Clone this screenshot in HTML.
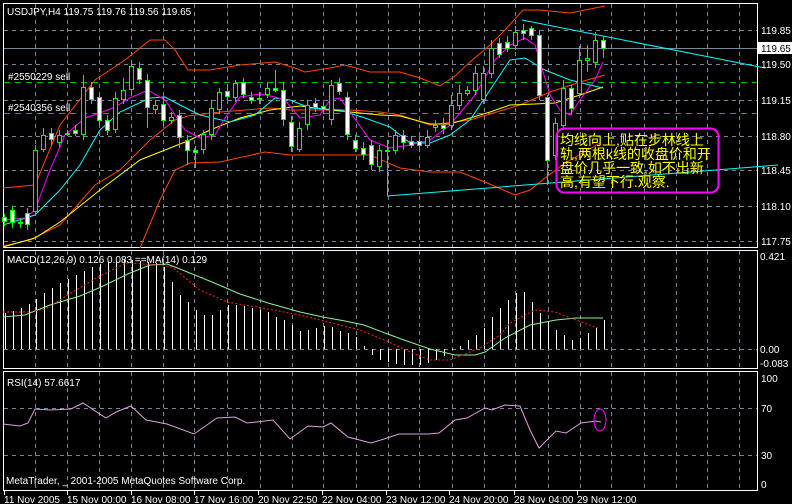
<!DOCTYPE html>
<html><head><meta charset="utf-8"><style>
body{margin:0;background:#000;width:792px;height:504px;overflow:hidden}
svg{display:block}
text{font-family:"Liberation Sans","Noto Sans CJK SC",sans-serif;font-size:10px;fill:#fff}
.g{stroke:#778899;stroke-width:1;stroke-dasharray:4 4;fill:none}
.w{fill:#fff;stroke:#00ff00;stroke-width:1}
.b{fill:#000;stroke:#00ff00;stroke-width:1}
.k{stroke:#00ff00;stroke-width:1}
</style></head><body>
<svg width="792" height="504" viewBox="0 0 792 504" xmlns="http://www.w3.org/2000/svg" shape-rendering="crispEdges">
<g class="g">
<path d="M35.5 4V247M67.5 4V247M99.5 4V247M131.5 4V247M163.5 4V247M194.5 4V247M227.5 4V247M260.5 4V247M292.5 4V247M323.5 4V247M356.5 4V247M388.5 4V247M419.5 4V247M452.5 4V247M484.5 4V247M515.5 4V247M548.5 4V247M580.5 4V247M611.5 4V247M644.5 4V247M676.5 4V247M707.5 4V247M739.5 4V247"/>
<path d="M4 30.5H757M4 64.5H757M4 100.5H757M4 136.5H757M4 170.5H757M4 206.5H757M4 241.5H757"/>
<path d="M35.5 251V368M67.5 251V368M99.5 251V368M131.5 251V368M163.5 251V368M194.5 251V368M227.5 251V368M260.5 251V368M292.5 251V368M323.5 251V368M356.5 251V368M388.5 251V368M419.5 251V368M452.5 251V368M484.5 251V368M515.5 251V368M548.5 251V368M580.5 251V368M611.5 251V368M644.5 251V368M676.5 251V368M707.5 251V368M739.5 251V368"/>
<path d="M4 349.5H757"/>
<path d="M35.5 372V490M67.5 372V490M99.5 372V490M131.5 372V490M163.5 372V490M194.5 372V490M227.5 372V490M260.5 372V490M292.5 372V490M323.5 372V490M356.5 372V490M388.5 372V490M419.5 372V490M452.5 372V490M484.5 372V490M515.5 372V490M548.5 372V490M580.5 372V490M611.5 372V490M644.5 372V490M676.5 372V490M707.5 372V490M739.5 372V490"/>
<path d="M4 408.5H757M4 455.5H757"/>
</g>
<path d="M4 48.5H757" stroke="#778899" fill="none"/>
<path d="M4 82.5H757M4 113.5H757" stroke="#00c000" stroke-dasharray="6 5" fill="none"/>
<rect x="3.5" y="3.5" width="754" height="244" fill="none" stroke="#fff"/>
<rect x="3.5" y="250.5" width="754" height="118" fill="none" stroke="#fff"/>
<rect x="3.5" y="371.5" width="754" height="119" fill="none" stroke="#fff"/>
<g shape-rendering="auto" fill="none" stroke-width="1">
<polyline stroke="#ff4500" points="3,188 35,185 60,125 95,80 125,60 150,40 165,40 175,50 188,70 210,70 240,65 275,62 295,68 305,72 330,68 345,65 370,72 400,72 420,78 440,86 455,76 470,62 490,45 505,30 523,10 540,10 570,13 605,6"/>
<polyline stroke="#ff4500" points="3,246 30,240 60,225 95,185 120,170 150,140 175,120 188,116 220,112 270,108 290,110 320,110 350,110 380,112 400,115 430,125 470,120 520,105 550,92 580,82 605,75"/>
<polyline stroke="#ff4500" points="140,248 160,200 175,170 190,163 220,162 265,152 290,155 330,155 370,155 400,168 430,172 460,172 485,182 515,195 530,190 545,178 565,163 600,143"/>
<polyline stroke="#ffff00" points="3,247 35,238 60,222 100,190 140,160 165,150 190,140 210,130 240,118 270,110 300,106 330,110 350,112 380,115 400,116 430,124 450,124 470,118 490,112 510,105 535,104 555,103 580,95 603,87"/>
<polyline stroke="#00ffff" points="3,225 35,215 60,190 80,165 100,130 120,112 150,98 165,97 180,105 200,115 230,122 255,115 275,98 290,100 310,108 340,110 365,118 390,127 410,143 430,143 450,135 470,120 490,90 510,60 525,58 545,70 570,80 590,85 603,88"/>
<polyline stroke="#ff00ff" points="3,220 25,218 35,210 50,170 65,135 85,118 100,113 115,107 130,98 148,90 165,100 185,130 200,138 215,135 225,118 240,97 260,94 275,97 285,100 300,118 320,115 330,100 340,98 350,112 370,140 390,148 410,145 430,140 450,125 475,95 495,60 510,45 525,38 535,45 550,95 560,110 570,115 580,100 595,80 603,62"/>
<line x1="522" y1="20" x2="765" y2="68" stroke="#00ffff"/>
<line x1="387" y1="196" x2="778" y2="165" stroke="#00ffff"/>
</g>
<g>
<path class="k" d="M4.5 214V226M12.5 206V228M20.5 218V228M27.5 208V230M35.5 145V216M43.5 128V152M51.5 128V145M59.5 130V147M67.5 130V136M75.5 125V136M83.5 75V140M91.5 82V104M99.5 92V125M107.5 115V135M115.5 92V133M123.5 78V104M131.5 60V95M139.5 62V84M147.5 74V128M155.5 100V114M163.5 96V126M171.5 112V124M179.5 110V148M187.5 135V165M195.5 146V168M203.5 130V154M211.5 100V140M219.5 88V114M227.5 86V100M235.5 80V102M243.5 78V98M251.5 92V104M259.5 92V104M267.5 82V98M275.5 70V92M283.5 82V126M291.5 116V152M299.5 122V152M307.5 100V130M315.5 98V112M323.5 102V114M331.5 80V125M339.5 78V95M347.5 92V140M355.5 135V152M363.5 142V160M371.5 140V170M379.5 145V172M387.5 140V196M395.5 130V154M403.5 130V150M411.5 136V148M419.5 136V150M427.5 130V148M435.5 120V132M443.5 118V134M451.5 95V130M459.5 85V110M467.5 86V96M475.5 66V95M483.5 66V104M491.5 40V78M499.5 38V58M507.5 36V52M515.5 26V50M523.5 24V40M531.5 26V40M539.5 30V100M547.5 95V185M555.5 118V160M563.5 80V130M571.5 85V115M579.5 46V98M587.5 45V72M595.5 32V68M603.5 36V58"/>
<rect class="w" x="2.5" y="217.5" width="4" height="4"/>
<rect class="w" x="10.5" y="210.5" width="4" height="12"/>
<rect class="b" x="18.5" y="222.5" width="4" height="1"/>
<rect class="w" x="25.5" y="213.5" width="4" height="11"/>
<rect class="b" x="33.5" y="150.5" width="4" height="61"/>
<rect class="b" x="41.5" y="135.5" width="4" height="14"/>
<rect class="w" x="49.5" y="133.5" width="4" height="6"/>
<rect class="b" x="57.5" y="135.5" width="4" height="7"/>
<rect class="b" x="65.5" y="133.5" width="4" height="1"/>
<rect class="w" x="73.5" y="130.5" width="4" height="3"/>
<rect class="b" x="81.5" y="87.5" width="4" height="47"/>
<rect class="w" x="89.5" y="87.5" width="4" height="12"/>
<rect class="w" x="97.5" y="97.5" width="4" height="23"/>
<rect class="w" x="105.5" y="120.5" width="4" height="10"/>
<rect class="b" x="113.5" y="98.5" width="4" height="31"/>
<rect class="b" x="121.5" y="90.5" width="4" height="9"/>
<rect class="b" x="129.5" y="66.5" width="4" height="23"/>
<rect class="w" x="137.5" y="68.5" width="4" height="11"/>
<rect class="w" x="145.5" y="80.5" width="4" height="27"/>
<rect class="b" x="153.5" y="105.5" width="4" height="4"/>
<rect class="w" x="161.5" y="104.5" width="4" height="16"/>
<rect class="b" x="169.5" y="117.5" width="4" height="3"/>
<rect class="w" x="177.5" y="115.5" width="4" height="22"/>
<rect class="w" x="185.5" y="140.5" width="4" height="10"/>
<rect class="w" x="193.5" y="150.5" width="4" height="2"/>
<rect class="b" x="201.5" y="134.5" width="4" height="15"/>
<rect class="b" x="209.5" y="108.5" width="4" height="26"/>
<rect class="b" x="217.5" y="92.5" width="4" height="17"/>
<rect class="w" x="225.5" y="91.5" width="4" height="5"/>
<rect class="b" x="233.5" y="83.5" width="4" height="14"/>
<rect class="w" x="241.5" y="82.5" width="4" height="12"/>
<rect class="w" x="249.5" y="97.5" width="4" height="3"/>
<rect class="b" x="257.5" y="98.5" width="4" height="1"/>
<rect class="b" x="265.5" y="88.5" width="4" height="6"/>
<rect class="w" x="273.5" y="88.5" width="4" height="2"/>
<rect class="w" x="281.5" y="90.5" width="4" height="29"/>
<rect class="w" x="289.5" y="122.5" width="4" height="24"/>
<rect class="b" x="297.5" y="128.5" width="4" height="21"/>
<rect class="b" x="305.5" y="105.5" width="4" height="19"/>
<rect class="w" x="313.5" y="103.5" width="4" height="4"/>
<rect class="w" x="321.5" y="106.5" width="4" height="3"/>
<rect class="b" x="329.5" y="85.5" width="4" height="34"/>
<rect class="w" x="337.5" y="83.5" width="4" height="8"/>
<rect class="w" x="345.5" y="97.5" width="4" height="37"/>
<rect class="w" x="353.5" y="140.5" width="4" height="8"/>
<rect class="w" x="361.5" y="148.5" width="4" height="6"/>
<rect class="w" x="369.5" y="145.5" width="4" height="19"/>
<rect class="b" x="377.5" y="150.5" width="4" height="16"/>
<rect class="b" x="385.5" y="150.5" width="4" height="1"/>
<rect class="b" x="393.5" y="135.5" width="4" height="15"/>
<rect class="w" x="401.5" y="135.5" width="4" height="7"/>
<rect class="w" x="409.5" y="141.5" width="4" height="4"/>
<rect class="w" x="417.5" y="141.5" width="4" height="4"/>
<rect class="b" x="425.5" y="137.5" width="4" height="8"/>
<rect class="b" x="433.5" y="125.5" width="4" height="2"/>
<rect class="w" x="441.5" y="125.5" width="4" height="3"/>
<rect class="b" x="449.5" y="105.5" width="4" height="20"/>
<rect class="b" x="457.5" y="93.5" width="4" height="12"/>
<rect class="b" x="465.5" y="90.5" width="4" height="3"/>
<rect class="b" x="473.5" y="73.5" width="4" height="17"/>
<rect class="b" x="481.5" y="73.5" width="4" height="26"/>
<rect class="b" x="489.5" y="48.5" width="4" height="25"/>
<rect class="w" x="497.5" y="43.5" width="4" height="11"/>
<rect class="w" x="505.5" y="42.5" width="4" height="6"/>
<rect class="b" x="513.5" y="32.5" width="4" height="13"/>
<rect class="w" x="521.5" y="30.5" width="4" height="3"/>
<rect class="w" x="529.5" y="28.5" width="4" height="7"/>
<rect class="w" x="537.5" y="35.5" width="4" height="60"/>
<rect class="w" x="545.5" y="97.5" width="4" height="63"/>
<rect class="b" x="553.5" y="123.5" width="4" height="32"/>
<rect class="b" x="561.5" y="88.5" width="4" height="37"/>
<rect class="w" x="569.5" y="88.5" width="4" height="20"/>
<rect class="b" x="577.5" y="60.5" width="4" height="33"/>
<rect class="b" x="585.5" y="58.5" width="4" height="2"/>
<rect class="b" x="593.5" y="40.5" width="4" height="22"/>
<rect class="w" x="601.5" y="40.5" width="4" height="8"/>
</g>
<rect x="556.5" y="128.5" width="162" height="64" rx="8" fill="none" stroke="#ff00ff" stroke-width="2"/>
<text x="560" y="145" style="fill:#ffff00;font-size:14px">均线向上,贴在步林线上</text>
<text x="560" y="159" style="fill:#ffff00;font-size:14px">轨,两根k线的收盘价和开</text>
<text x="560" y="173" style="fill:#ffff00;font-size:14px">盘价几乎一致,如不出新</text>
<text x="560" y="187" style="fill:#ffff00;font-size:14px">高,有望下行.观察.</text>
<text x="7" y="15">USDJPY,H4  119.75 119.76 119.56 119.65</text>
<text x="8" y="80">#2550229 sell</text>
<text x="8" y="111">#2540356 sell</text>
<text x="761" y="34">119.85</text>
<rect x="758" y="42" width="34" height="12" fill="#fff"/>
<text x="761" y="52" style="fill:#000">119.65</text>
<text x="761" y="68">119.50</text>
<text x="761" y="104">119.15</text>
<text x="761" y="140">118.80</text>
<text x="761" y="174">118.45</text>
<text x="761" y="210">118.10</text>
<text x="761" y="245">117.75</text>
<path stroke="#fff" fill="none" d="M5.5 349V313M13.5 349V311M21.5 349V308M29.5 349V304M36.5 349V299M44.5 349V293M52.5 349V288M60.5 349V283M68.5 349V279M76.5 349V275M84.5 349V271M92.5 349V267M100.5 349V264M108.5 349V262M116.5 349V261M124.5 349V260M132.5 349V260M140.5 349V261M148.5 349V262M156.5 349V263M164.5 349V267M172.5 349V282M180.5 349V295M188.5 349V302M196.5 349V310M204.5 349V315M212.5 349V315M220.5 349V310M228.5 349V305M236.5 349V305M244.5 349V306M252.5 349V308M260.5 349V310M268.5 349V312M276.5 349V317M284.5 349V320M292.5 349V325M300.5 349V331M308.5 349V330M316.5 349V328M324.5 349V326M332.5 349V327M340.5 349V331M348.5 349V333M356.5 349V337M364.5 349V346M372.5 349V355M380.5 349V360M388.5 349V362M396.5 349V364M404.5 349V365M412.5 349V365M420.5 349V365M428.5 349V363M436.5 349V360M444.5 349V356M452.5 349V350M460.5 349V346M468.5 349V340M476.5 349V335M484.5 349V328M492.5 349V317M500.5 349V308M508.5 349V300M516.5 349V293M524.5 349V292M532.5 349V302M540.5 349V313M548.5 349V322M556.5 349V330M564.5 349V335M572.5 349V340M580.5 349V338M588.5 349V333M596.5 349V328M604.5 349V320"/>
<g shape-rendering="auto" fill="none">
<polyline stroke="#90ee90" points="3,317 25,315 50,305 80,296 101,287 130,273 150,265 167,264 180,269 212,282 240,294 268,303 300,312 323,317 345,321 364,325 385,333 404,340 430,349 455,355 475,355 485,352 505,338 530,325 556,320 576,318 603,318"/>
<polyline stroke="#ff2020" stroke-dasharray="2 2" points="3,312 30,312 45,309 76,290 100,276 126,263 160,265 172,267 200,290 227,302 268,309 300,315 328,322 360,330 389,342 410,352 430,360 450,360 480,348 500,335 510,323 535,310 555,312 576,320 598,328"/>
</g>
<text x="7" y="263">MACD(12,26,9) 0.126 0.083  ==MA(14) 0.129</text>
<text x="760" y="260">0.421</text>
<text x="760" y="353">0.00</text>
<text x="760" y="367">-0.083</text>
<polyline shape-rendering="auto" fill="none" stroke="#dda0dd" points="3,424 20,426 28,423 35,409 50,410 71,409 83,403 106,418 116,412 131,406 146,420 167,424 194,434 217,418 235,417 247,423 273,420 290,439 308,426 323,427 331,423 348,437 371,443 384,439 399,434 429,434 439,433 455,420 467,418 485,408 492,410 505,405 520,406 530,430 539,448 556,431 566,433 581,423 596,421 601,422"/>
<ellipse cx="600" cy="420" rx="6" ry="11" fill="none" stroke="#ff00ff" shape-rendering="auto"/>
<text x="7" y="386">RSI(14) 57.6617</text>
<text x="6" y="484">MetaTrader, _ 2001-2005 MetaQuotes Software Corp.</text>
<text x="761" y="382">100</text>
<text x="761" y="412">70</text>
<text x="761" y="459">30</text>
<text x="761" y="488">0</text>
<path stroke="#fff" d="M4.5 490V495M67.5 490V495M131.5 490V495M194.5 490V495M258.5 490V495M322.5 490V495M386.5 490V495M449.5 490V495M514.5 490V495M577.5 490V495"/>
<text x="4" y="503">11 Nov 2005</text>
<text x="67" y="503">15 Nov 00:00</text>
<text x="131" y="503">16 Nov 08:00</text>
<text x="194" y="503">17 Nov 16:00</text>
<text x="258" y="503">20 Nov 22:50</text>
<text x="322" y="503">22 Nov 04:00</text>
<text x="386" y="503">23 Nov 12:00</text>
<text x="449" y="503">24 Nov 20:00</text>
<text x="514" y="503">28 Nov 04:00</text>
<text x="577" y="503">29 Nov 12:00</text>
</svg>
</body></html>
